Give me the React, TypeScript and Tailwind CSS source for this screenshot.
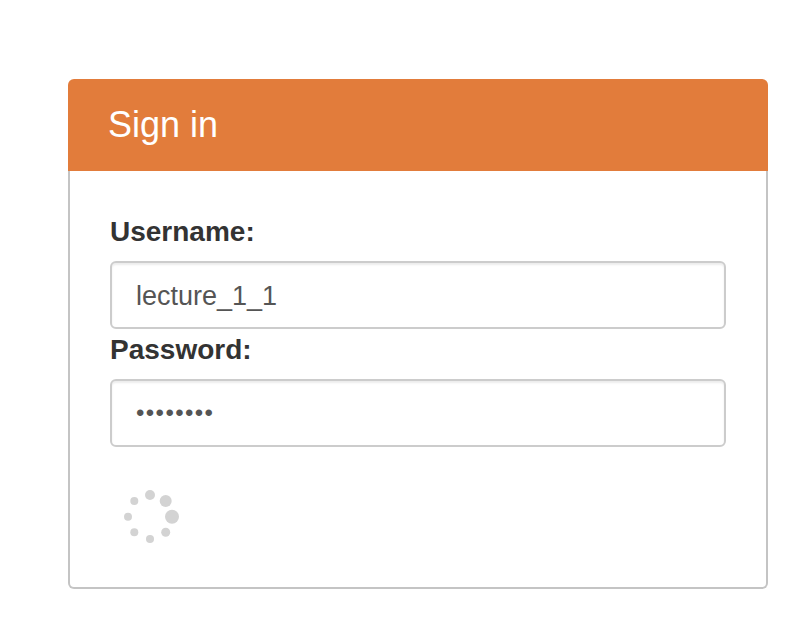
export default function App() {
  const font = { fontFamily: '"Liberation Sans", Arial, sans-serif' };
  return (
    <div className="min-h-[644px] bg-white pt-[79px] pl-[68px] font-['Liberation_Sans',Arial,sans-serif]" style={font}>
      <div className="w-[700px]">
        <div className="flex h-[92px] items-center rounded-t-[6px] bg-[#e27c3b] pl-[40px] text-[36px] leading-[40px] text-white">
          Sign in
        </div>
        <div className="flex h-[418px] flex-col rounded-b-[6px] border-x-2 border-b-2 border-[#c4c4c4] bg-white px-[40px] pt-[45px]">
          <label className="h-[45px] text-[28px] leading-[32px] font-bold text-[#333333]">Username:</label>
          <input
            readOnly
            value="lecture_1_1"
            className="h-[68px] w-full rounded-[6px] border-2 border-[#cccccc] bg-white px-[24px] pt-[2px] text-[27px] text-[#555555] shadow-[inset_0_2px_2px_rgba(0,0,0,0.075)] outline-none"
          />
          <label className="mt-[5px] h-[45px] text-[28px] leading-[32px] font-bold text-[#333333]">Password:</label>
          <input
            readOnly
            type="password"
            value="abcdefgh"
            className="h-[68px] w-full rounded-[6px] border-2 border-[#cccccc] bg-white px-[24px] text-[24px] tracking-[1.4px] text-[#555555] shadow-[inset_0_2px_2px_rgba(0,0,0,0.075)] outline-none"
          />
          <svg className="mt-[43px] ml-[12px] h-[60px] w-[60px]" viewBox="0 0 60 60" fill="#d3d3d3">
            <circle cx="28" cy="5" r="5" />
            <circle cx="43.7" cy="11" r="6" />
            <circle cx="50" cy="26.7" r="7" />
            <circle cx="43.7" cy="42.3" r="4.5" />
            <circle cx="28" cy="49" r="4" />
            <circle cx="12.3" cy="42.3" r="4" />
            <circle cx="6" cy="26.7" r="4" />
            <circle cx="12.3" cy="11" r="4" />
          </svg>
        </div>
      </div>
    </div>
  );
}
